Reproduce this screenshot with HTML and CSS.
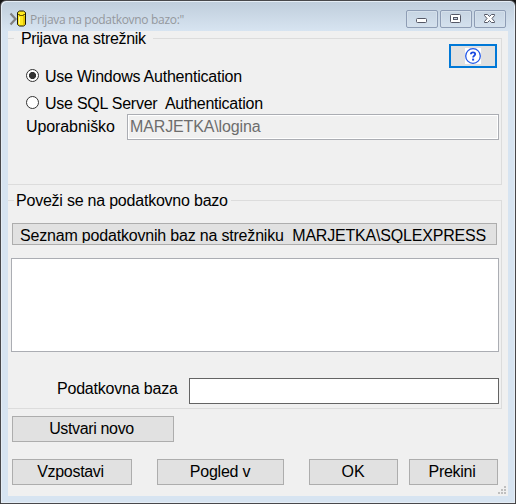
FILE: index.html
```html
<!DOCTYPE html>
<html lang="sl">
<head>
<meta charset="utf-8">
<title>Prijava</title>
<link rel="stylesheet" href="styles.css">
</head>
<body>
<div class="window">
  <header class="titlebar">
    <svg class="app-icon" width="17" height="17" viewBox="0 0 17 17">
      <path d="M1.500 3.500l5 5.500-5 5.500" fill="none" stroke="#808080" stroke-width="2.200"/>
      <path d="M8.500 2.500l2-1.500h4l2 1.500v12l-2 1.500h-4l-2-1.500z" fill="#ffe920" stroke="#1b1600"/>
      <path d="M9 4.500h1.500v1h4v-1h1.500" fill="none" stroke="#6b5900"/>
      <path d="M15 6v9" fill="none" stroke="#d9b800" stroke-width="1.500"/>
      <path d="M10.500 7v7" fill="none" stroke="#fff9a0"/>
    </svg>
    <span class="title">Prijava na podatkovno bazo:"</span>
    <div class="controls">
      <span class="control"><svg width="30" height="16"><rect x="9.500" y="7.500" width="10" height="4" rx="1" fill="#fff" stroke="#555866"/></svg></span>
      <span class="control"><svg width="30" height="16"><rect x="9.500" y="3.500" width="10" height="8" rx="1" fill="#fff" stroke="#555866"/><rect x="12.500" y="6.500" width="4" height="2" fill="#c8d3e0" stroke="#555866"/></svg></span>
      <span class="control"><svg width="30" height="16"><path d="M9.500 3.500h3l2 2 2-2h3v1l-2.500 3 2.500 3v1h-3l-2-2-2 2h-3v-1l2.500-3-2.500-3z" fill="#fff" stroke="#555866"/></svg></span>
    </div>
  </header>
  <main class="client">
    <section class="group login">
      <h2 class="legend legend-login">Prijava na strežnik</h2>
      <button class="help"><svg width="16" height="16" viewBox="0 0 16 16"><rect width="16" height="16" fill="#fff"/><circle cx="8" cy="8" r="7.300" fill="#fff" stroke="#2459e8" stroke-width="1.300"/><path d="M5.900 6.200C5.900 3.600 10.200 3.700 10.200 6.100C10.200 7.700 8.100 7.700 8.100 9.400" fill="none" stroke="#1748e0" stroke-width="1.800"/><rect x="7.100" y="10.600" width="2" height="2" fill="#1748e0"/></svg></button>
      <div class="option first"><span class="radio checked"></span><span class="windows">Use Windows Authentication</span></div>
      <div class="option second"><span class="radio"></span><span class="sql">Use SQL Server&nbsp; Authentication</span></div>
      <div class="user"><label>Uporabniško</label><span class="userbox">MARJETKA\logina</span></div>
    </section>
    <section class="group database">
      <h2 class="legend legend-db">Poveži se na podatkovno bazo</h2>
      <button class="btn list-btn"><span class="list-text">Seznam podatkovnih baz na strežniku&nbsp; MARJETKA\SQLEXPRESS</span></button>
      <div class="listbox"></div>
      <div class="dbrow"><label>Podatkovna baza</label><span class="dbbox"></span></div>
    </section>
    <button class="btn create">Ustvari novo</button>
    <div class="actions">
      <button class="btn connect">Vzpostavi</button>
      <button class="btn view">Pogled v</button>
      <button class="btn ok">OK</button>
      <button class="btn cancel">Prekini</button>
    </div>
    <svg class="grip" width="8" height="8" fill="#bfbfbf"><path d="M6 0h2v2h-2zM3 3h2v2h-2zM6 3h2v2h-2zM0 6h2v2h-2zM3 6h2v2h-2zM6 6h2v2h-2z"/></svg>
  </main>
</div>
</body>
</html>
```
FILE: styles.css
```css
* { box-sizing: border-box; }
body {
  margin: 0;
  background: #151515;
  font: 16px/18px "Liberation Sans", Arial, sans-serif;
  color: #000;
  overflow: hidden;
}
.window {
  width: 516px;
  height: 504px;
  padding: 0 7px 7px;
  border: 1px solid #48484b;
  border-radius: 6px 6px 0 0;
  background: linear-gradient(#bfcddb, #d7e4f1 30px);
  box-shadow: inset 1px 1px #e5edf5, inset -1px -1px #e5edf5;
}
.titlebar { display: flex; height: 30px; }
.app-icon { margin: 9px 0 0 1px; flex: none; }
.title {
  margin: 10px 0 0 4px;
  font: 12px/18px "Open Sans", "Noto Sans", sans-serif;
  letter-spacing: -0.31px;
  color: #94989d;
  white-space: nowrap;
}
.controls { display: flex; gap: 2px; margin: 9px 2px 0 auto; }
.control {
  width: 32px;
  height: 18px;
  border: 1px solid #8e9db5;
  border-radius: 2px;
  box-shadow: inset 0 0 0 1px #d5e0eb;
}
.control svg { display: block; }
.client { position: relative; height: 465px; padding-top: 7px; background: #f0f0f0; }
.group {
  position: relative;
  width: 494px;
  border: 1px solid #dcdcdc;
  border-left: 0;
}
.login { height: 147px; }
.database { height: 209px; margin-top: 15px; }
.legend {
  width: max-content;
  height: 16px;
  margin: -8px 0 0;
  background: #f0f0f0;
  font-size: 16px;
  line-height: 16px;
  font-weight: normal;
  white-space: nowrap;
}
.legend-login { margin-left: 6px; padding: 0 7px; letter-spacing: -0.32px; }
.legend-db { margin-left: 6px; padding: 0 3px 0 2px; letter-spacing: -0.22px; }
.help {
  position: absolute;
  top: 5px;
  right: 4px;
  display: flex;
  align-items: center;
  justify-content: center;
  width: 48px;
  height: 24px;
  padding: 0;
  border: 2px solid #0078d7;
  background: #e1e1e1;
}
.option { display: flex; align-items: center; height: 19px; margin-left: 18px; gap: 6px; white-space: pre; }
.option span:last-child { padding-top: 2px; }
.windows { letter-spacing: -0.23px; }
.sql { letter-spacing: -0.25px; }
.first { margin-top: 19px; }
.second { margin-top: 8px; }
.radio {
  width: 13px;
  height: 13px;
  border: 1px solid #333;
  border-radius: 50%;
  background: #fff;
}
.checked { background: radial-gradient(circle, #333 3.2px, #fff 3.9px); }
.user { display: flex; align-items: center; margin: 2px 0 0 18px; }
.user label { width: 101px; letter-spacing: -0.1px; }
.userbox {
  width: 372px;
  height: 26px;
  padding: 3px 2px;
  border: 1px solid #abadb3;
  box-shadow: inset 0 0 0 1px #fff;
  color: #6d6d6d;
  letter-spacing: -0.14px;
}
.btn {
  display: block;
  height: 26px;
  padding: 0;
  border: 1px solid #adadad;
  background: #e1e1e1;
  color: #000;
  font: 16px/18px "Liberation Sans", Arial, sans-serif;
  white-space: nowrap;
}
.list-btn { width: 485px; height: 22px; margin: 14px 0 0 4px; padding-left: 7px; text-align: left; letter-spacing: -0.19px; }
.list-text { display: block; height: 16px; margin-top: 2px; overflow: hidden; }
.listbox { width: 488px; height: 94px; margin: 13px 0 0 3px; border: 1px solid #abadb3; background: #fff; }
.dbrow { display: flex; align-items: center; margin: 26px 0 0 49px; }
.dbrow label { width: 132px; margin-top: -4px; letter-spacing: -0.2px; }
.dbbox { width: 310px; height: 26px; border: 1px solid #646464; background: #fff; }
.create { width: 162px; margin: 7px 0 0 4px; padding-right: 3px; letter-spacing: -0.35px; }
.actions { display: flex; margin: 17px 0 0 4px; }
.connect { width: 120px; padding-right: 3px; letter-spacing: -0.3px; }
.view { width: 127px; margin-left: 25px; padding-right: 1px; letter-spacing: -0.25px; }
.ok { width: 89px; margin-left: 25px; padding-right: 1px; }
.cancel { width: 89px; margin-left: 11px; padding-right: 3px; letter-spacing: -0.3px; }
.grip { position: absolute; right: 2px; bottom: 2px; }
```
